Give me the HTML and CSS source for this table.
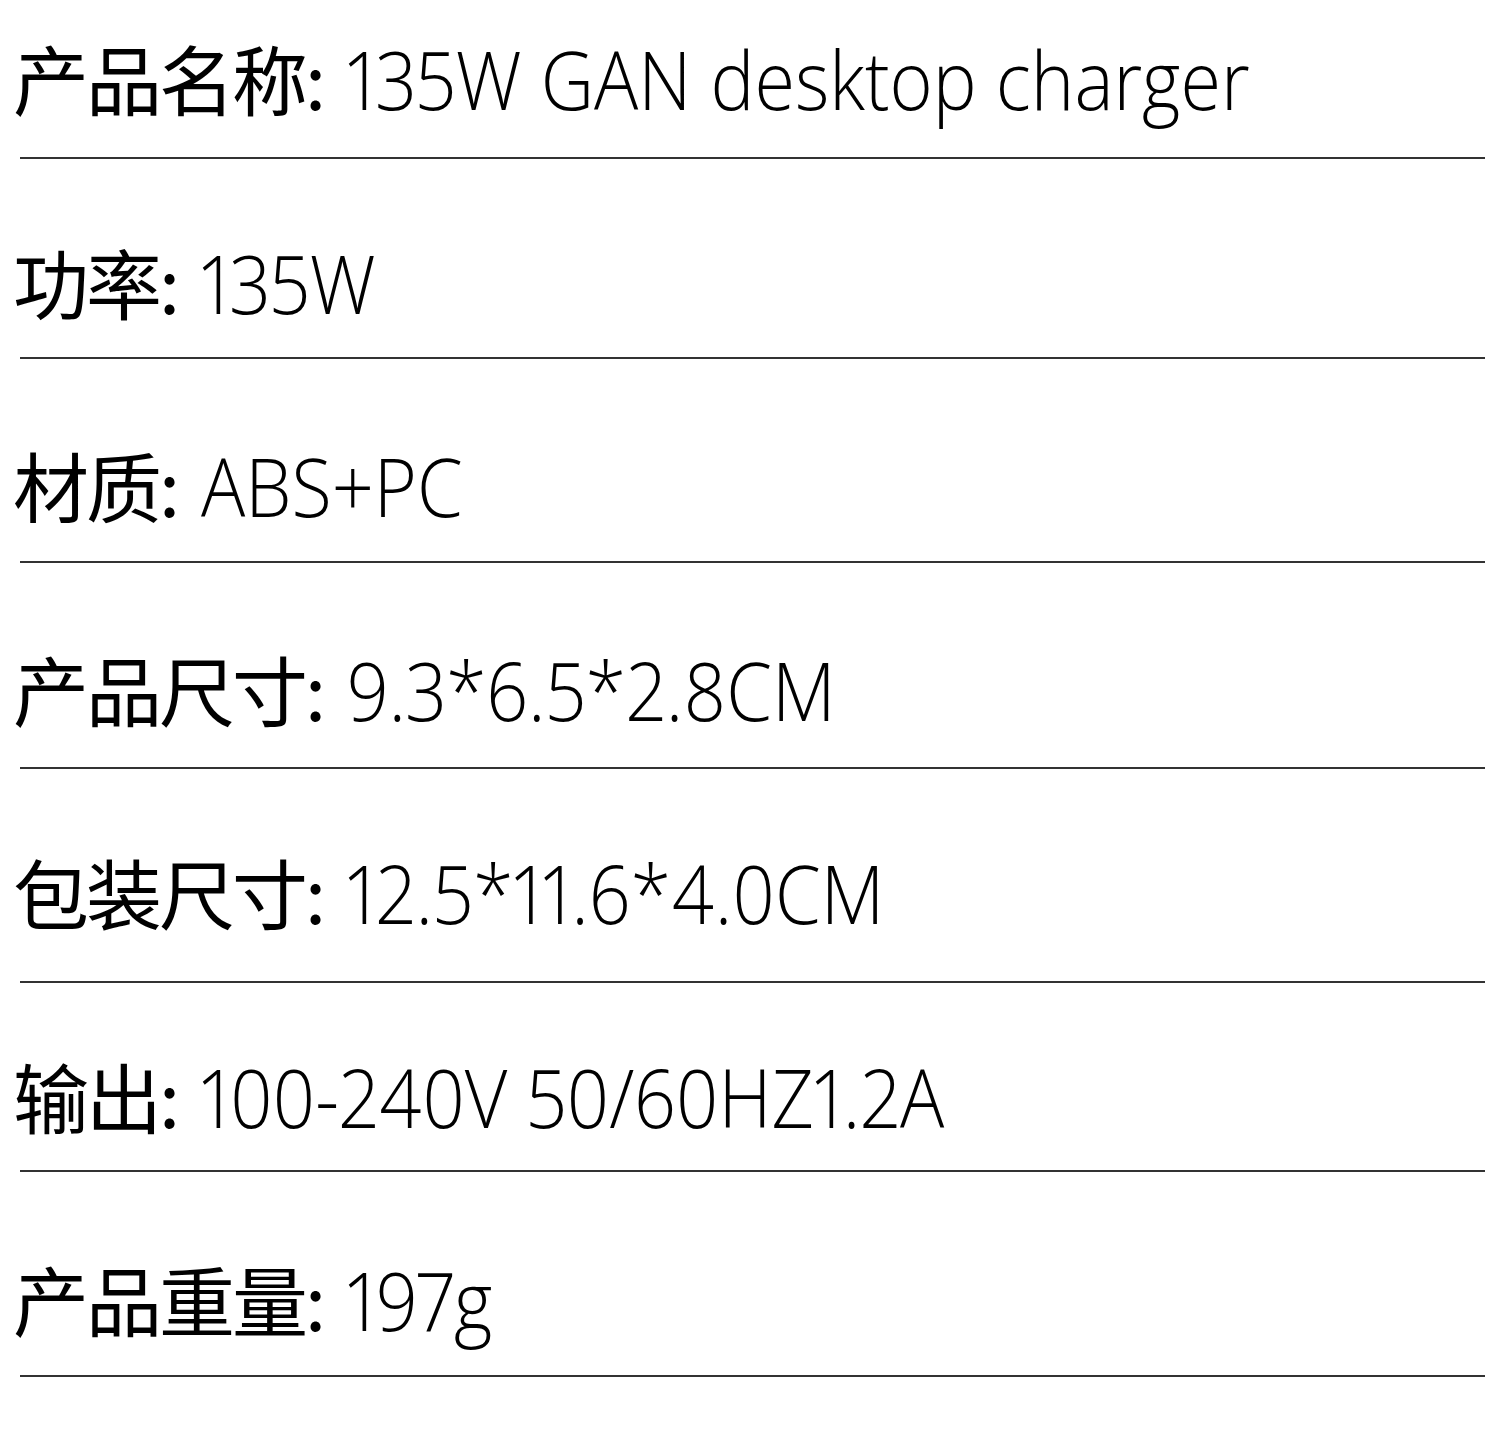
FILE: index.html
```html
<!DOCTYPE html>
<html lang="zh">
<head>
<meta charset="utf-8">
<link rel="stylesheet" href="styles.css">
</head>
<body>
<main class="specs">
  <div class="row r1"><p class="spec"><span class="label">产品名称:</span><span class="value">135W GAN desktop charger</span></p><div class="rule"></div></div>
  <div class="row r2"><p class="spec"><span class="label">功率:</span><span class="value">135W</span></p><div class="rule"></div></div>
  <div class="row r3"><p class="spec"><span class="label">材质:</span><span class="value">ABS+PC</span></p><div class="rule"></div></div>
  <div class="row r4"><p class="spec"><span class="label">产品尺寸:</span><span class="value">9.3*6.5*2.8CM</span></p><div class="rule"></div></div>
  <div class="row r5"><p class="spec"><span class="label">包装尺寸:</span><span class="value">12.5*11.6*4.0CM</span></p><div class="rule"></div></div>
  <div class="row r6"><p class="spec"><span class="label">输出:</span><span class="value">100-240V 50/60HZ1.2A</span></p><div class="rule"></div></div>
  <div class="row r7"><p class="spec"><span class="label">产品重量:</span><span class="value">197g</span></p><div class="rule"></div></div>
</main>
</body>
</html>
```
FILE: styles.css
```css
html, body {
  margin: 0;
  padding: 0;
  background: #ffffff;
}
.specs {
  width: 1500px;
}
.row {
  height: 203.5px;
  display: flex;
  flex-direction: column;
}
.spec {
  margin: 0;
  padding: 37px 0 0 13px;
  height: 113px;
  line-height: 80px;
  white-space: nowrap;
  color: #000;
}
.label {
  font-family: "Noto Sans CJK SC", sans-serif;
  font-weight: 400;
  font-size: 76px;
  letter-spacing: -3px;
}
.value {
  display: inline-block;
  margin-left: 24px;
  font-family: "Open Sans", sans-serif;
  font-weight: 300;
  font-size: 81px;
  font-variant-numeric: proportional-nums;
  transform: scaleX(0.91);
  transform-origin: left center;
}
.rule {
  margin: 4px 0 0 20px;
  width: 1465px;
  height: 2px;
  background: #333333;
}
.r1 .rule { margin-top: 7px; }
.r2 .rule { margin-top: 3px; }
.r4 .rule { margin-top: 6px; }
.r5 .rule { margin-top: 17px; }
.r6 .rule { margin-top: 2px; }
```
